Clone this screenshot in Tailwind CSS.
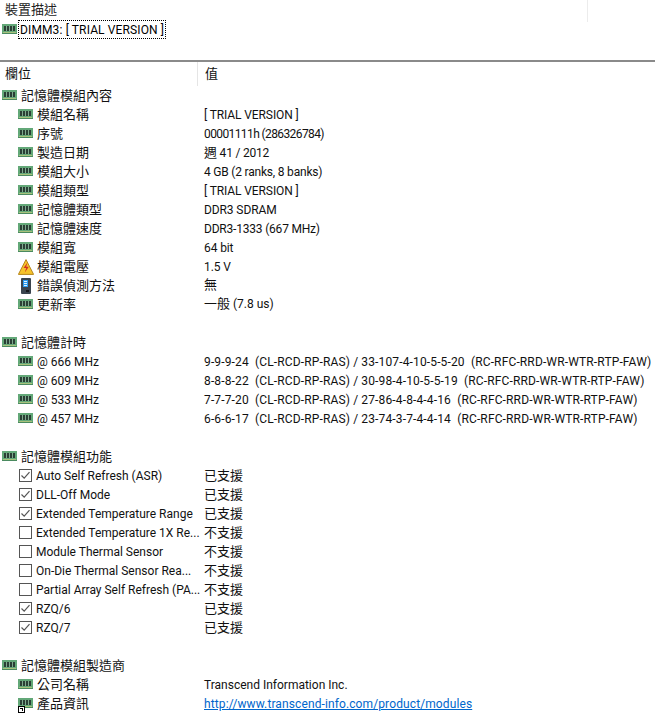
<!DOCTYPE html>
<html lang="en">
<head>
    <meta charset="UTF-8">
    <title>裝置描述</title>
    <script src="https://cdn.jsdelivr.net/npm/@tailwindcss/browser@4"></script>
</head>
<body class="bg-white">
    <svg class="hidden">
        <symbol id="ram" viewBox="0 0 15 15">
            <rect x="0" y="2" width="15" height="10" fill="#63a878"/>
            <rect x="2" y="4" width="11" height="5" fill="#2a3f35"/>
            <path d="M4.5 4v5M7.5 4v5M10.5 4v5" stroke="#7fa98e"/>
            <path d="M1 10.5h13" stroke="#a9c27c"/>
            <path d="M0 11.5h15" stroke="#4a8a60"/>
        </symbol>
        <symbol id="warn" viewBox="0 0 16 16">
            <path d="M8 .6 15.6 15.4H.4Z" fill="#f6c32a" stroke="#b5861c" stroke-linejoin="round"/>
            <path d="M9.4 3.5 5.6 9h2.6L6.8 13.6 10.8 7.8H8.2Z" fill="#d2301f"/>
        </symbol>
        <symbol id="phone" viewBox="0 0 10 16">
            <rect x="0" y="0" width="10" height="16" rx="1" fill="#3a444e"/>
            <rect x="2" y="2" width="5" height="7" fill="#2b9cf0"/>
            <path d="M3 3.5h3M3 5.5h3M3 7.5h3" stroke="#e2f3ff"/>
            <rect x="5" y="12" width="3" height="2" fill="#14181c"/>
        </symbol>
    </svg>

    <div class="w-[655px] h-[719px] overflow-hidden relative text-[12px] leading-[19px] text-[#111] font-['Roboto','Noto_Sans_CJK_TC',sans-serif]">
        <div class="h-[60px]">
            <div class="h-[19px] pl-[5px] text-[13px] text-[#222]">裝置描述</div>
            <div class="flex items-center h-[22px] mt-[-1px] pt-[1px] pl-[2px]">
                <svg class="w-[15px] h-[15px] shrink-0"><use href="#ram"/></svg>
                <span class="ml-[1px] px-[1px] h-[19px] border border-dotted border-black leading-[18px] tracking-[0.13px] text-black">DIMM3: [ TRIAL VERSION ]</span>
            </div>
        </div>
        <div class="h-[2px] bg-[#8a8a8a]"></div>
        <div class="flex h-[24px] items-center text-[13px]">
            <div class="w-[197px] pl-[5px] pb-[2px]">欄位</div>
            <div class="w-[1px] h-[24px] bg-[#e5e5e5]"></div>
            <div class="pl-[7px] pb-[2px]">值</div>
        </div>
        <div id="rows"></div>
        <div class="absolute left-[587px] top-0 w-[1px] h-[22px] bg-[#ececec]"></div>
    </div>

    <script>
        const cjk = s => `<span class="text-[13px]">${s}</span>`;
        const rows = [
            ['h', 'ram', '記憶體模組內容'],
            ['r', 'ram', '模組名稱', '[ TRIAL VERSION ]', 'pt-[2px] tracking-[-0.1px]'],
            ['r', 'ram', '序號', '00001111h (286326784)', 'pt-[2px] tracking-[-0.6px]'],
            ['r', 'ram', '製造日期', cjk('週') + ' 41 / 2012', 'tracking-[-0.2px]'],
            ['r', 'ram', '模組大小', '4 GB (2 ranks, 8 banks)', 'pt-[2px] tracking-[-0.2px]'],
            ['r', 'ram', '模組類型', '[ TRIAL VERSION ]', 'pt-[2px] tracking-[-0.1px]'],
            ['r', 'ram', '記憶體類型', 'DDR3 SDRAM', 'pt-[2px] tracking-[-0.1px]'],
            ['r', 'ram', '記憶體速度', 'DDR3-1333 (667 MHz)', 'pt-[2px] tracking-[-0.2px]'],
            ['r', 'ram', '模組寬', '64 bit', 'pt-[2px] tracking-[-0.1px]'],
            ['r', 'warn', '模組電壓', '1.5 V', 'pt-[2px] tracking-[-0.1px]'],
            ['r', 'phone', '錯誤偵測方法', cjk('無'), 'pb-[1px]'],
            ['r', 'ram', '更新率', cjk('一般') + ' (7.8 us)', 'pb-[1px]'],
            ['b'],
            ['h', 'ram', '記憶體計時'],
            ['t', 'ram', '@ 666 MHz', '9-9-9-24  (CL-RCD-RP-RAS) / 33-107-4-10-5-5-20  (RC-RFC-RRD-WR-WTR-RTP-FAW)', 'pt-[2px] tracking-[0.14px]'],
            ['t', 'ram', '@ 609 MHz', '8-8-8-22  (CL-RCD-RP-RAS) / 30-98-4-10-5-5-19  (RC-RFC-RRD-WR-WTR-RTP-FAW)', 'pt-[2px] tracking-[0.14px]'],
            ['t', 'ram', '@ 533 MHz', '7-7-7-20  (CL-RCD-RP-RAS) / 27-86-4-8-4-4-16  (RC-RFC-RRD-WR-WTR-RTP-FAW)', 'pt-[2px] tracking-[0.14px]'],
            ['t', 'ram', '@ 457 MHz', '6-6-6-17  (CL-RCD-RP-RAS) / 23-74-3-7-4-4-14  (RC-RFC-RRD-WR-WTR-RTP-FAW)', 'pt-[2px] tracking-[0.14px]'],
            ['b'],
            ['h', 'ram', '記憶體模組功能'],
            ['c', true, 'Auto Self Refresh (ASR)', '已支援'],
            ['c', true, 'DLL-Off Mode', '已支援'],
            ['c', true, 'Extended Temperature Range', '已支援'],
            ['c', false, 'Extended Temperature 1X Re...', '不支援'],
            ['c', false, 'Module Thermal Sensor', '不支援'],
            ['c', false, 'On-Die Thermal Sensor Rea...', '不支援'],
            ['c', false, 'Partial Array Self Refresh (PA...', '不支援'],
            ['c', true, 'RZQ/6', '已支援'],
            ['c', true, 'RZQ/7', '已支援'],
            ['b'],
            ['h', 'ram', '記憶體模組製造商'],
            ['r', 'ram', '公司名稱', 'Transcend Information Inc.', 'pt-[2px]'],
            ['l', 'ram', '產品資訊', 'http://www.transcend-info.com/product/modules', ''],
        ];

        const icon = name => {
            if (name === 'warn') return '<svg class="w-[16px] h-[16px] shrink-0 mr-[-1px]"><use href="#warn"/></svg>';
            if (name === 'phone') return '<svg class="w-[10px] h-[16px] shrink-0 ml-[3px] mr-[2px]"><use href="#phone"/></svg>';
            return `<svg class="w-[15px] h-[15px] shrink-0"><use href="#${name}"/></svg>`;
        };
        const box = on => `<span class="w-[13px] h-[13px] shrink-0 border border-[#555] bg-white flex items-center justify-center">${on ? '<svg class="w-[11px] h-[11px]" viewBox="0 0 11 11"><path d="M1.5 5.5 4.2 8.2 9.5 2.2" fill="none" stroke="#555" stroke-width="1.2"/></svg>' : ''}</span>`;
        const shortcut = '<span class="absolute left-0 bottom-[-2px] w-[7px] h-[7px] bg-white border border-black flex items-center justify-center"><span class="w-[3px] h-[3px] border-t border-r border-black"></span></span>';

        document.getElementById('rows').innerHTML = rows.map(r => {
            if (r[0] === 'b') return '<div class="h-[19px]"></div>';
            if (r[0] === 'h') return `<div class="flex items-center h-[19px] pl-[2px]">${icon(r[1])}<span class="ml-[4px] text-[13px] pb-[1px]">${r[2]}</span></div>`;
            if (r[0] === 'c') return `<div class="flex items-center h-[19px]"><div class="w-[204px] shrink-0 pl-[19px] flex items-center">${box(r[1])}<span class="ml-[4px] pt-[2px] whitespace-nowrap">${r[2]}</span></div><span class="text-[13px] pb-[1px]">${r[3]}</span></div>`;
            const value = r[0] === 'l'
                ? `<a class="text-[#0066cc] underline whitespace-pre pt-[2px] tracking-[0.11px]">${r[3]}</a>`
                : `<span class="whitespace-pre ${r[4]}">${r[3]}</span>`;
            const badge = r[0] === 'l' ? shortcut : '';
            const label = r[0] === 't'
                ? `<span class="ml-[4px] pt-[2px]">${r[2]}</span>`
                : `<span class="ml-[4px] text-[13px] pb-[1px]">${r[2]}</span>`;
            return `<div class="flex items-center h-[19px]"><div class="w-[204px] shrink-0 pl-[18px] flex items-center"><span class="relative flex">${icon(r[1])}${badge}</span>${label}</div>${value}</div>`;
        }).join('');
    </script>
</body>
</html>
